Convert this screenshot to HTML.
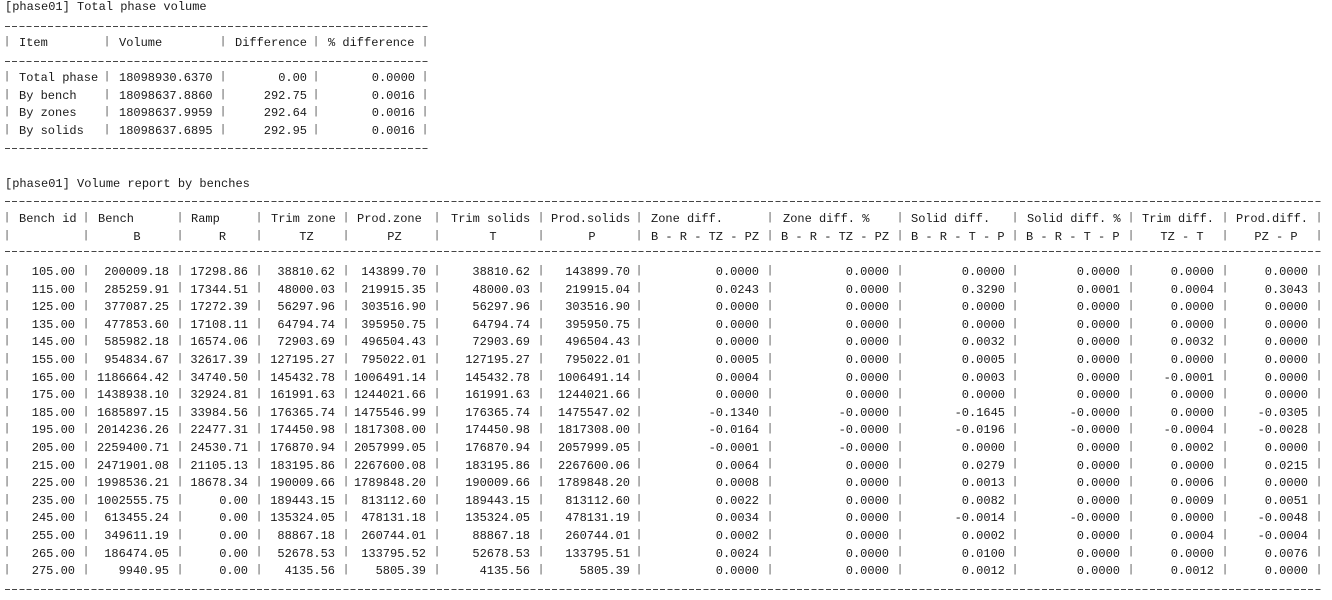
<!DOCTYPE html>
<html><head><meta charset="utf-8">
<style>
html,body{margin:0;padding:0;background:#fff;width:1332px;height:600px;overflow:hidden;position:relative}
body{font-family:"Liberation Mono",monospace;font-size:12px;color:#1a1a1a}
.t{position:absolute;white-space:pre;line-height:17.6px}
.r{text-align:right}
.p{position:absolute;white-space:pre;line-height:17.6px;width:8px;text-align:center;color:#555;font-size:11px}
.d{position:absolute;height:1px;background:repeating-linear-gradient(90deg,#444 0 5px,transparent 5px 7.2px)}
.c{text-align:center}
</style></head><body>

<div class="t" style="left:5px;top:-1px">[phase01] Total phase volume</div>
<div class="d" style="left:5px;top:26px;width:424px"></div>
<div class="t" style="left:19px;top:35px">Item</div>
<div class="t" style="left:119px;top:35px">Volume</div>
<div class="t" style="left:235px;top:35px">Difference</div>
<div class="t" style="left:328px;top:35px">% difference</div>
<div class="d" style="left:5px;top:61px;width:424px"></div>
<div class="t" style="left:19px;top:70px">Total phase
By bench
By zones
By solids</div>
<div class="t" style="left:119px;top:70px">18098930.6370
18098637.8860
18098637.9959
18098637.6895</div>
<div class="t r" style="left:230px;width:77px;top:70px">0.00
292.75
292.64
292.95</div>
<div class="t r" style="left:320px;width:95px;top:70px">0.0000
0.0016
0.0016
0.0016</div>
<div class="p" style="left:3px;top:34px">|

|
|
|
|</div>
<div class="p" style="left:103px;top:34px">|

|
|
|
|</div>
<div class="p" style="left:219px;top:34px">|

|
|
|
|</div>
<div class="p" style="left:312px;top:34px">|

|
|
|
|</div>
<div class="p" style="left:421px;top:34px">|

|
|
|
|</div>
<div class="d" style="left:5px;top:148px;width:424px"></div>

<div class="t" style="left:5px;top:176px">[phase01] Volume report by benches</div>
<div class="d" style="left:5px;top:201px;width:1316px"></div>

<div class="t" style="left:19px;top:211px">Bench id</div>
<div class="t" style="left:98px;top:211px">Bench</div>
<div class="t" style="left:191px;top:211px">Ramp</div>
<div class="t" style="left:271px;top:211px">Trim zone</div>
<div class="t" style="left:357px;top:211px">Prod.zone</div>
<div class="t" style="left:451px;top:211px">Trim solids</div>
<div class="t" style="left:551px;top:211px">Prod.solids</div>
<div class="t" style="left:651px;top:211px">Zone diff.</div>
<div class="t" style="left:783px;top:211px">Zone diff. %</div>
<div class="t" style="left:911px;top:211px">Solid diff.</div>
<div class="t" style="left:1027px;top:211px">Solid diff. %</div>
<div class="t" style="left:1142px;top:211px">Trim diff.</div>
<div class="t" style="left:1236px;top:211px">Prod.diff.</div>

<div class="t c" style="left:90px;width:94px;top:229px">B</div>
<div class="t c" style="left:183px;width:79px;top:229px">R</div>
<div class="t c" style="left:263px;width:87px;top:229px">TZ</div>
<div class="t c" style="left:349px;width:91px;top:229px">PZ</div>
<div class="t c" style="left:441px;width:104px;top:229px">T</div>
<div class="t c" style="left:544px;width:96px;top:229px">P</div>
<div class="t" style="left:651px;top:229px">B - R - TZ - PZ</div>
<div class="t" style="left:781px;top:229px">B - R - TZ - PZ</div>
<div class="t" style="left:911px;top:229px">B - R - T - P</div>
<div class="t" style="left:1026px;top:229px">B - R - T - P</div>
<div class="t c" style="left:1135px;width:94px;top:229px">TZ - T</div>
<div class="t c" style="left:1229px;width:94px;top:229px">PZ - P</div>

<div class="d" style="left:5px;top:251px;width:1316px"></div>

<div class="t r" style="left:7px;width:68px;top:264px">105.00
115.00
125.00
135.00
145.00
155.00
165.00
175.00
185.00
195.00
205.00
215.00
225.00
235.00
245.00
255.00
265.00
275.00</div>
<div class="t r" style="left:86px;width:83px;top:264px">200009.18
285259.91
377087.25
477853.60
585982.18
954834.67
1186664.42
1438938.10
1685897.15
2014236.26
2259400.71
2471901.08
1998536.21
1002555.75
613455.24
349611.19
186474.05
9940.95</div>
<div class="t r" style="left:180px;width:68px;top:264px">17298.86
17344.51
17272.39
17108.11
16574.06
32617.39
34740.50
32924.81
33984.56
22477.31
24530.71
21105.13
18678.34
0.00
0.00
0.00
0.00
0.00</div>
<div class="t r" style="left:259px;width:76px;top:264px">38810.62
48000.03
56297.96
64794.74
72903.69
127195.27
145432.78
161991.63
176365.74
174450.98
176870.94
183195.86
190009.66
189443.15
135324.05
88867.18
52678.53
4135.56</div>
<div class="t r" style="left:346px;width:80px;top:264px">143899.70
219915.35
303516.90
395950.75
496504.43
795022.01
1006491.14
1244021.66
1475546.99
1817308.00
2057999.05
2267600.08
1789848.20
813112.60
478131.18
260744.01
133795.52
5805.39</div>
<div class="t r" style="left:437px;width:93px;top:264px">38810.62
48000.03
56297.96
64794.74
72903.69
127195.27
145432.78
161991.63
176365.74
174450.98
176870.94
183195.86
190009.66
189443.15
135324.05
88867.18
52678.53
4135.56</div>
<div class="t r" style="left:541px;width:89px;top:264px">143899.70
219915.04
303516.90
395950.75
496504.43
795022.01
1006491.14
1244021.66
1475547.02
1817308.00
2057999.05
2267600.06
1789848.20
813112.60
478131.19
260744.01
133795.51
5805.39</div>
<div class="t r" style="left:639px;width:120px;top:264px">0.0000
0.0243
0.0000
0.0000
0.0000
0.0005
0.0004
0.0000
-0.1340
-0.0164
-0.0001
0.0064
0.0008
0.0022
0.0034
0.0002
0.0024
0.0000</div>
<div class="t r" style="left:770px;width:119px;top:264px">0.0000
0.0000
0.0000
0.0000
0.0000
0.0000
0.0000
0.0000
-0.0000
-0.0000
-0.0000
0.0000
0.0000
0.0000
0.0000
0.0000
0.0000
0.0000</div>
<div class="t r" style="left:900px;width:105px;top:264px">0.0000
0.3290
0.0000
0.0000
0.0032
0.0005
0.0003
0.0000
-0.1645
-0.0196
0.0000
0.0279
0.0013
0.0082
-0.0014
0.0002
0.0100
0.0012</div>
<div class="t r" style="left:1015px;width:105px;top:264px">0.0000
0.0001
0.0000
0.0000
0.0000
0.0000
0.0000
0.0000
-0.0000
-0.0000
0.0000
0.0000
0.0000
0.0000
-0.0000
0.0000
0.0000
0.0000</div>
<div class="t r" style="left:1131px;width:83px;top:264px">0.0000
0.0004
0.0000
0.0000
0.0032
0.0000
-0.0001
0.0000
0.0000
-0.0004
0.0002
0.0000
0.0006
0.0009
0.0000
0.0004
0.0000
0.0012</div>
<div class="t r" style="left:1225px;width:83px;top:264px">0.0000
0.3043
0.0000
0.0000
0.0000
0.0000
0.0000
0.0000
-0.0305
-0.0028
0.0000
0.0215
0.0000
0.0051
-0.0048
-0.0004
0.0076
0.0000</div>

<div class="p" style="left:3px;top:210px">|
|

|
|
|
|
|
|
|
|
|
|
|
|
|
|
|
|
|
|</div>
<div class="p" style="left:82px;top:210px">|
|

|
|
|
|
|
|
|
|
|
|
|
|
|
|
|
|
|
|</div>
<div class="p" style="left:176px;top:210px">|
|

|
|
|
|
|
|
|
|
|
|
|
|
|
|
|
|
|
|</div>
<div class="p" style="left:255px;top:210px">|
|

|
|
|
|
|
|
|
|
|
|
|
|
|
|
|
|
|
|</div>
<div class="p" style="left:342px;top:210px">|
|

|
|
|
|
|
|
|
|
|
|
|
|
|
|
|
|
|
|</div>
<div class="p" style="left:433px;top:210px">|
|

|
|
|
|
|
|
|
|
|
|
|
|
|
|
|
|
|
|</div>
<div class="p" style="left:537px;top:210px">|
|

|
|
|
|
|
|
|
|
|
|
|
|
|
|
|
|
|
|</div>
<div class="p" style="left:635px;top:210px">|
|

|
|
|
|
|
|
|
|
|
|
|
|
|
|
|
|
|
|</div>
<div class="p" style="left:766px;top:210px">|
|

|
|
|
|
|
|
|
|
|
|
|
|
|
|
|
|
|
|</div>
<div class="p" style="left:896px;top:210px">|
|

|
|
|
|
|
|
|
|
|
|
|
|
|
|
|
|
|
|</div>
<div class="p" style="left:1011px;top:210px">|
|

|
|
|
|
|
|
|
|
|
|
|
|
|
|
|
|
|
|</div>
<div class="p" style="left:1127px;top:210px">|
|

|
|
|
|
|
|
|
|
|
|
|
|
|
|
|
|
|
|</div>
<div class="p" style="left:1221px;top:210px">|
|

|
|
|
|
|
|
|
|
|
|
|
|
|
|
|
|
|
|</div>
<div class="p" style="left:1315px;top:210px">|
|

|
|
|
|
|
|
|
|
|
|
|
|
|
|
|
|
|
|</div>

<div class="d" style="left:5px;top:589px;width:1316px"></div>
</body></html>
